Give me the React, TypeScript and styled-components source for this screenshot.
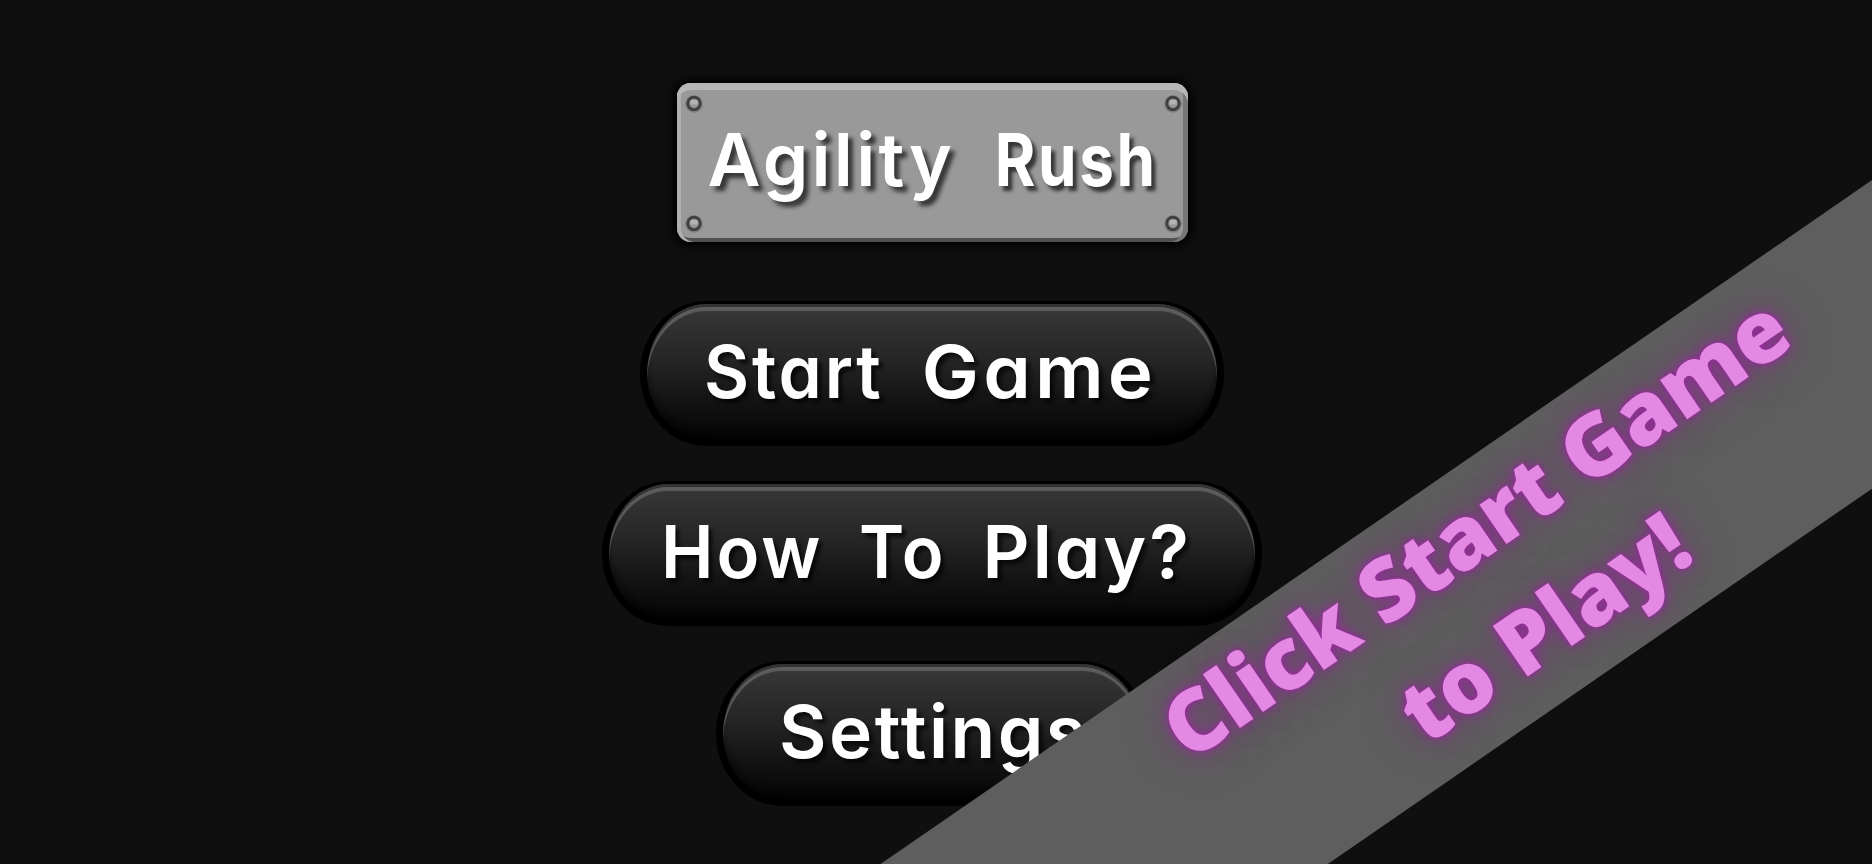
import styled, { createGlobalStyle } from 'styled-components';

interface WordProps {
  text: string;
  spacing: number;
  stretch: number;
  weight?: number;
}

interface MenuItem {
  width: number;
  labelLeft: number;
  labelWidth: number;
  words: WordProps[];
}

const titleWords: WordProps[] = [
  { text: 'Agility', spacing: 3.2, stretch: 1 },
  { text: 'Rush', spacing: 3, stretch: 0.85, weight: 700 },
];

const menuItems: MenuItem[] = [
  {
    width: 584,
    labelLeft: 64,
    labelWidth: 449,
    words: [
      { text: 'Start', spacing: 3, stretch: 0.95 },
      { text: 'Game', spacing: 4, stretch: 1.045 },
    ],
  },
  {
    width: 660,
    labelLeft: 59,
    labelWidth: 528,
    words: [
      { text: 'How', spacing: 3, stretch: 0.965 },
      { text: 'To', spacing: 3, stretch: 0.94 },
      { text: 'Play?', spacing: 3, stretch: 1 },
    ],
  },
  {
    width: 432,
    labelLeft: 63,
    labelWidth: 302,
    words: [{ text: 'Settings', spacing: 2.5, stretch: 1 }],
  },
];

const Rivet = () => (
  <svg width="18" height="20" viewBox="0 0 18 20">
    <circle cx="9" cy="10" r="9" fill="#848484" />
    <circle cx="9" cy="9.5" r="6.2" fill="#969696" stroke="#404040" strokeWidth="3" />
    <rect x="5.5" y="6" width="7" height="4.5" fill="#b4b4b4" />
  </svg>
);

const Words = ({ words }: { words: WordProps[] }) => (
  <>
    {words.map((word) => (
      <Word
        key={word.text}
        $spacing={word.spacing}
        $stretch={word.stretch}
        $weight={word.weight ?? 600}
      >
        {word.text}
      </Word>
    ))}
  </>
);

export default function App() {
  return (
    <Screen>
      <GlobalStyle />
      <Menu>
        <TitlePlate>
          <RivetColumn>
            <Rivet />
            <Rivet />
          </RivetColumn>
          <TitleLabel>
            <Words words={titleWords} />
          </TitleLabel>
          <RivetColumn>
            <Rivet />
            <Rivet />
          </RivetColumn>
        </TitlePlate>
        {menuItems.map((item) => (
          <MenuButton key={item.words[0].text} $width={item.width} $left={item.labelLeft}>
            <ButtonLabel $width={item.labelWidth}>
              <Words words={item.words} />
            </ButtonLabel>
          </MenuButton>
        ))}
      </Menu>
      <Ribbon>
        <RibbonLine>Click Start Game</RibbonLine>
        <RibbonLine>to Play!</RibbonLine>
      </Ribbon>
    </Screen>
  );
}

const GlobalStyle = createGlobalStyle`
  * {
    box-sizing: border-box;
  }
  body {
    margin: 0;
    background: #0f0f0f;
  }
`;

const Screen = styled.main`
  position: relative;
  width: 1872px;
  height: 864px;
  overflow: hidden;
  background: #0f0f0f;
`;

const Menu = styled.div`
  display: flex;
  flex-direction: column;
  align-items: center;
  gap: 35px;
  width: 1864px;
  padding-top: 83px;
`;

const TitlePlate = styled.header`
  display: flex;
  justify-content: space-between;
  width: 511px;
  height: 159px;
  margin-bottom: 24px;
  padding: 11px 6px 8px 8px;
  border-radius: 14px;
  background: #999;
  box-shadow:
    inset 0 7px 0 #b7b7b7,
    inset 4px 0 0 #b0b0b0,
    inset -5px 0 0 #777,
    inset 0 -4px 0 #505050,
    0 0 10px 4px #000;
`;

const RivetColumn = styled.div`
  display: flex;
  flex-direction: column;
  justify-content: space-between;
`;

const TitleLabel = styled.h1`
  display: flex;
  justify-content: space-between;
  width: 447px;
  margin: 22px 4px 0 0;
  color: #fff;
  font: 600 73px/88px Inter, sans-serif;
  font-feature-settings: 'cv11';
  text-shadow: 5px 5px 4px rgba(0, 0, 0, 0.65);
`;

const MenuButton = styled.button<{ $width: number; $left: number }>`
  display: flex;
  width: ${({ $width }) => $width}px;
  height: 145px;
  margin: 0;
  padding: 24px 0 0 ${({ $left }) => $left - 7}px;
  border: solid #000;
  border-width: 3px 7px 7px;
  border-radius: 67px / 73px;
  background: linear-gradient(#383838, #252525 42%, #151515 68%, #060606 98%);
  box-shadow:
    inset 0 3px 0 #333,
    inset 0 7px 1px #5c5c5c,
    inset 0 -8px 5px rgba(0, 0, 0, 0.4);
`;

const ButtonLabel = styled.span<{ $width: number }>`
  display: flex;
  justify-content: space-between;
  width: ${({ $width }) => $width}px;
  color: #fff;
  font: 600 73px/88px Inter, sans-serif;
  font-feature-settings: 'cv11';
  text-shadow: 4px 4px 4px rgba(0, 0, 0, 0.7);
`;

const Word = styled.span<{ $spacing: number; $stretch: number; $weight: number }>`
  margin-right: ${({ $spacing }) => -$spacing}px;
  font-weight: ${({ $weight }) => $weight};
  letter-spacing: ${({ $spacing }) => $spacing}px;
  white-space: nowrap;
  transform: scaleX(${({ $stretch }) => $stretch});
  transform-origin: left;

  &:last-child {
    transform-origin: right;
  }
`;

const Ribbon = styled.div`
  position: absolute;
  top: 455px;
  left: 613px;
  display: flex;
  flex-direction: column;
  gap: 7px;
  width: 1800px;
  height: 254px;
  padding-top: 2px;
  background: #5e5e5e;
  transform: rotate(-34.6deg);
`;

const RibbonLine = styled.div`
  color: #e389e3;
  font: 800 86px/114px 'Open Sans', sans-serif;
  text-align: center;
  text-shadow:
    0 0 3px #9a2d9f,
    0 0 10px #962a9b,
    0 0 20px rgba(150, 42, 155, 0.55),
    0 0 44px rgba(143, 42, 147, 0.35);
`;
